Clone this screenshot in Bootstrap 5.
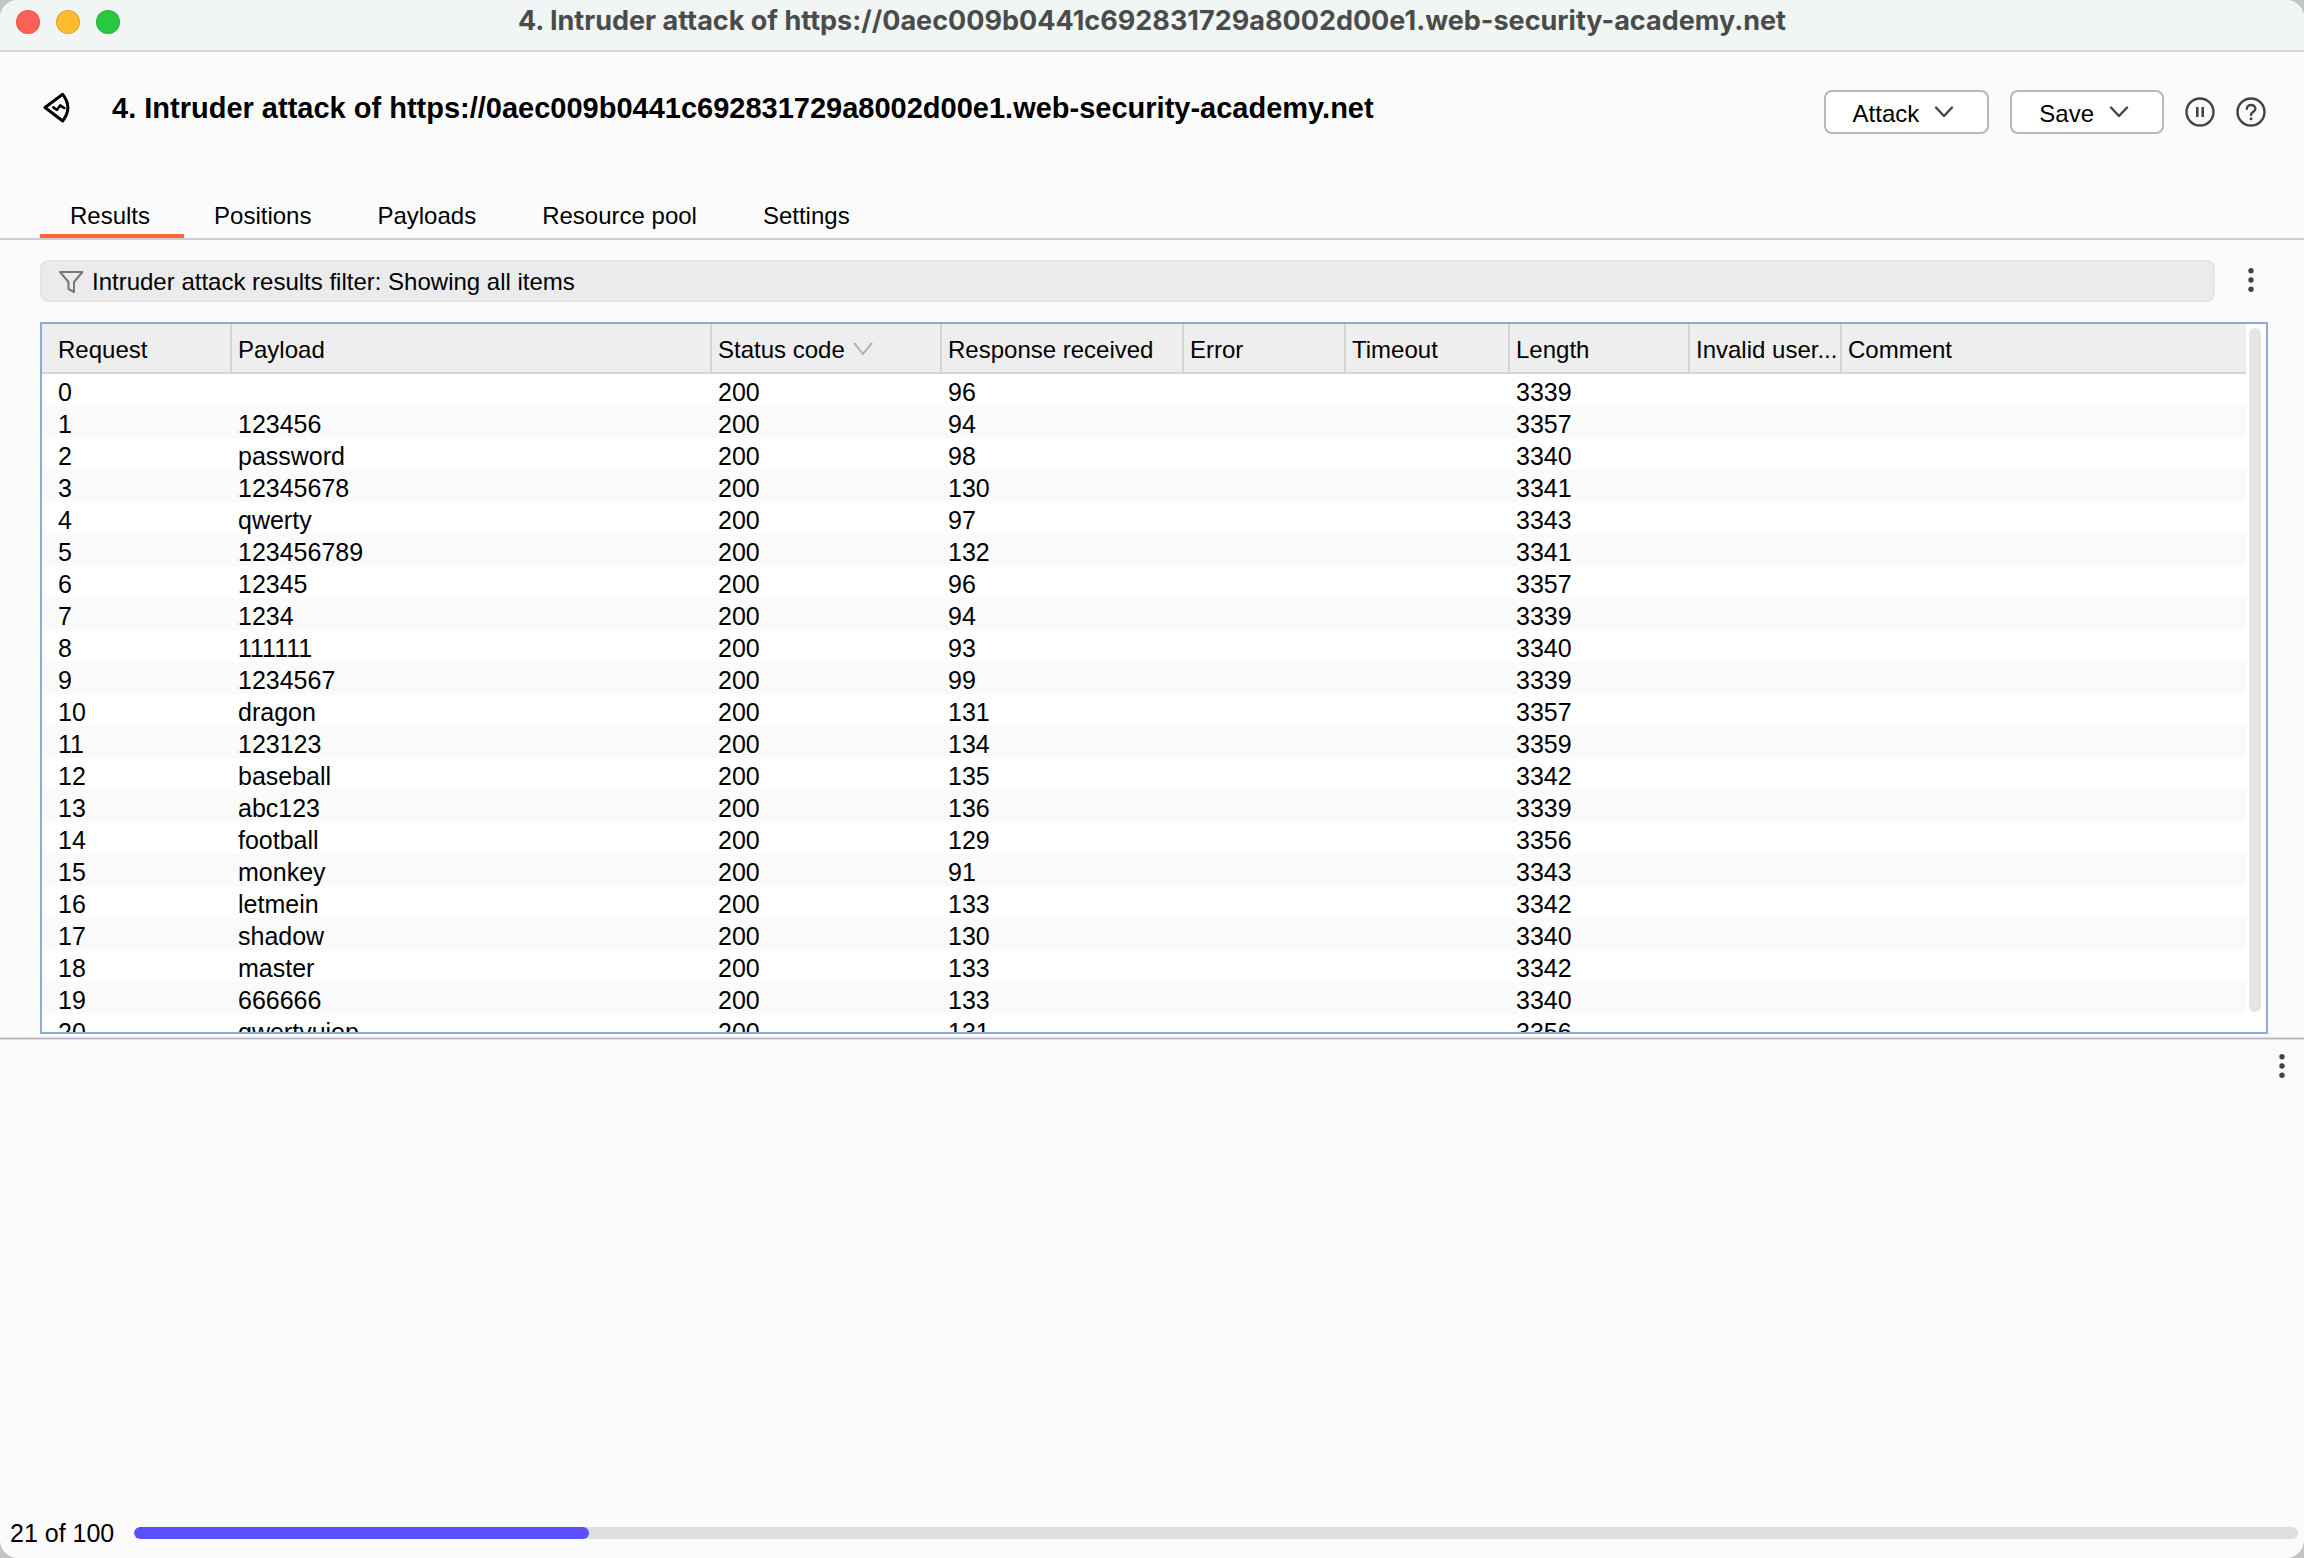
<!DOCTYPE html>
<html lang="en">
<head>
<meta charset="utf-8">
<meta name="viewport" content="width=device-width, initial-scale=1">
<title>Intruder attack</title>
<link href="https://cdn.jsdelivr.net/npm/bootstrap@5.3.0/dist/css/bootstrap.min.css" rel="stylesheet">
<style>
body{background:#c4c4c4;color:#000;font-family:"Liberation Sans",Arial,sans-serif;font-size:24px;line-height:32px}
.app-window{background:#fbfbfb;border-radius:18px;overflow:hidden}
.title-bar{height:52px;background:#f1f5f4;border-bottom:2px solid #d6d9d8;padding-left:16px;padding-bottom:6px}
.light{width:24px;height:24px;border-radius:50%;border:1px solid rgba(0,0,0,.12)}
.light-red{background:#ff5f57}.light-yellow{background:#febb2e}.light-green{background:#28c840}
.lights{gap:16px;width:108px}
.win-title{font-family:Inter,"Liberation Sans",sans-serif;font-weight:700;font-size:27px;line-height:30px;color:#4a4c4b;padding-right:124px;padding-bottom:2px}
.app-head{padding:38px 38px 0 42px;height:148px}
.app-head h1{font-size:29px;font-weight:700;line-height:32px;margin:0;padding-left:40px;padding-top:2px}
.head-actions{gap:21px}
.head-btn{background:#fff;border:2px solid #b9b7b7;border-radius:8px;height:44px;font-size:24px;line-height:32px;color:#000;padding:6px 33px 2px 27px;display:flex;align-items:center;gap:15px}
.head-btn svg{margin-top:-4px}
.round-btn{border:0;background:none;padding:0;display:flex}
.tabs{border-bottom:2px solid #c9cdcf;padding-left:40px;flex-wrap:nowrap}
.tabs .nav-link{color:#000;padding:0 36px 4px 30px;height:38px;border-radius:0}
.tabs .nav-link.active{padding-right:34px;border-bottom:4px solid #ff6633}
.filter-row{padding:20px 38px 20px 40px;gap:21px}
.filter-btn{height:42px;background:#ebebeb;border:2px solid #e5e5e5;border-radius:8px;padding:1px 16px 0;color:#000;text-align:left;display:flex;align-items:center;gap:8px}
.grid-pane{flex:708 1 0;min-height:0;margin:0 36px 3px 40px;border:2px solid #8eacd2;background:#fff;overflow:hidden}
.results{table-layout:fixed;width:100%;border-collapse:separate;border-spacing:0;margin:0}
.results th{font-weight:400;height:50px;background:#eee;border-bottom:2px solid #d4d4d4;border-right:2px solid #d4d4d4;padding:4px 0 0 6px;white-space:nowrap;overflow:hidden}
.results th svg{margin-left:4px;vertical-align:2px}
.results th:last-child{border-right:0}
.results td{height:32px;padding:4px 0 0 6px;font-size:25px;line-height:28px;white-space:nowrap}
.results th:first-child,.results td:first-child{padding-left:16px}
.results tbody tr:nth-child(even){background:#fafafa}
.scroll-track{width:20px;padding:4px 5px 20px 3px}
.scroll-thumb{background:#e5e5e5;border-radius:6px}
.splitter{height:3px;background:#b8b6b6;border-top:1px solid #dedcdc;border-bottom:1px solid #dedcdc}
.detail-pane{flex:476 1 0;min-height:0}
.detail-pane .round-btn{margin:14px 18px 0 0}
.status-row{height:42px;padding:0 6px 8px 10px;gap:20px;font-size:25px}
.attack-progress{height:12px;border-radius:6px;background:#dedede;flex-grow:1}
.attack-progress .progress-bar{background:#5b50ff;border-radius:6px}
</style>
<script src="https://cdn.jsdelivr.net/npm/bootstrap@5.3.0/dist/js/bootstrap.bundle.min.js"></script>
</head>
<body>
<div class="app-window vh-100 d-flex flex-column">
  <header class="title-bar d-flex align-items-center flex-shrink-0">
    <div class="lights d-flex"><span class="light light-red"></span><span class="light light-yellow"></span><span class="light light-green"></span></div>
    <div class="win-title flex-grow-1 text-center">4. Intruder attack of https://0aec009b0441c692831729a8002d00e1.web-security-academy.net</div>
  </header>

  <div class="app-head d-flex align-items-start flex-shrink-0">
    <svg width="30" height="36" viewBox="0 0 30 36" fill="none" stroke="#000" stroke-width="3" stroke-linejoin="round" stroke-linecap="round" aria-hidden="true"><path d="M3 17.500 L20.700 4.300 Q31 17.500 20.700 31 Z"/><path d="M11.300 17.300 L15 19.800 L18.200 15.400 L22.300 18" stroke-width="2.600"/></svg>
    <h1 class="flex-grow-1">4. Intruder attack of https://0aec009b0441c692831729a8002d00e1.web-security-academy.net</h1>
    <div class="head-actions d-flex align-items-center">
      <button type="button" class="head-btn">Attack <svg width="20" height="12" viewBox="0 0 20 12" fill="none" stroke="#444" stroke-width="2.400" stroke-linecap="round" stroke-linejoin="round"><path d="M2 1.500 L10 10 L18 1.500"/></svg></button>
      <button type="button" class="head-btn">Save <svg width="20" height="12" viewBox="0 0 20 12" fill="none" stroke="#444" stroke-width="2.400" stroke-linecap="round" stroke-linejoin="round"><path d="M2 1.500 L10 10 L18 1.500"/></svg></button>
      <button type="button" class="round-btn" aria-label="Pause"><svg width="30" height="30" viewBox="0 0 30 30" fill="none" stroke="#444" stroke-width="2.400"><circle cx="15" cy="15" r="13.500"/><path d="M12.300 10v10M17.700 10v10" stroke-width="2.600"/></svg></button>
      <button type="button" class="round-btn" aria-label="Help"><svg width="30" height="30" viewBox="0 0 30 30" fill="none" stroke="#444" stroke-width="2.400"><circle cx="15" cy="15" r="13.500"/><path d="M10.800 11.800C10.800 6.800 19.400 6.800 19.400 11.800C19.400 14.800 15 14.600 15 18" stroke-linecap="round"/><circle cx="15" cy="21.800" r="1.500" fill="#444" stroke="none"/></svg></button>
    </div>
  </div>

  <ul class="nav tabs flex-shrink-0">
    <li class="nav-item"><a class="nav-link active" href="#">Results</a></li>
    <li class="nav-item"><a class="nav-link" href="#">Positions</a></li>
    <li class="nav-item"><a class="nav-link" href="#">Payloads</a></li>
    <li class="nav-item"><a class="nav-link" href="#">Resource pool</a></li>
    <li class="nav-item"><a class="nav-link" href="#">Settings</a></li>
  </ul>

  <div class="filter-row d-flex align-items-center flex-shrink-0">
    <button type="button" class="filter-btn flex-grow-1"><svg width="26" height="24" viewBox="0 0 26 24" fill="none" stroke="#777" stroke-width="2" stroke-linejoin="round"><path d="M2 2H24.500L16 12V22L10.500 19V12Z"/></svg>Intruder attack results filter: Showing all items</button>
    <button type="button" class="round-btn" aria-label="More options"><svg width="30" height="30" viewBox="0 0 30 30" fill="#444"><circle cx="15" cy="4.700" r="2.700"/><circle cx="15" cy="14" r="2.700"/><circle cx="15" cy="23.300" r="2.700"/></svg></button>
  </div>

  <main class="grid-pane d-flex">
    <div class="flex-grow-1 overflow-hidden">
      <table class="results">
        <colgroup><col style="width:190px"><col style="width:480px"><col style="width:230px"><col style="width:242px"><col style="width:162px"><col style="width:164px"><col style="width:180px"><col style="width:152px"><col></colgroup>
        <thead><tr><th>Request</th><th>Payload</th><th>Status code<svg width="28" height="14" viewBox="0 0 28 14" fill="none" stroke="#b4b4b4" stroke-width="2"><path d="M5 1L14 12L23 1"/></svg></th><th>Response received</th><th>Error</th><th>Timeout</th><th>Length</th><th>Invalid user...</th><th>Comment</th></tr></thead>
        <tbody>
          <tr><td>0</td><td></td><td>200</td><td>96</td><td></td><td></td><td>3339</td><td></td><td></td></tr>
          <tr><td>1</td><td>123456</td><td>200</td><td>94</td><td></td><td></td><td>3357</td><td></td><td></td></tr>
          <tr><td>2</td><td>password</td><td>200</td><td>98</td><td></td><td></td><td>3340</td><td></td><td></td></tr>
          <tr><td>3</td><td>12345678</td><td>200</td><td>130</td><td></td><td></td><td>3341</td><td></td><td></td></tr>
          <tr><td>4</td><td>qwerty</td><td>200</td><td>97</td><td></td><td></td><td>3343</td><td></td><td></td></tr>
          <tr><td>5</td><td>123456789</td><td>200</td><td>132</td><td></td><td></td><td>3341</td><td></td><td></td></tr>
          <tr><td>6</td><td>12345</td><td>200</td><td>96</td><td></td><td></td><td>3357</td><td></td><td></td></tr>
          <tr><td>7</td><td>1234</td><td>200</td><td>94</td><td></td><td></td><td>3339</td><td></td><td></td></tr>
          <tr><td>8</td><td>111111</td><td>200</td><td>93</td><td></td><td></td><td>3340</td><td></td><td></td></tr>
          <tr><td>9</td><td>1234567</td><td>200</td><td>99</td><td></td><td></td><td>3339</td><td></td><td></td></tr>
          <tr><td>10</td><td>dragon</td><td>200</td><td>131</td><td></td><td></td><td>3357</td><td></td><td></td></tr>
          <tr><td>11</td><td>123123</td><td>200</td><td>134</td><td></td><td></td><td>3359</td><td></td><td></td></tr>
          <tr><td>12</td><td>baseball</td><td>200</td><td>135</td><td></td><td></td><td>3342</td><td></td><td></td></tr>
          <tr><td>13</td><td>abc123</td><td>200</td><td>136</td><td></td><td></td><td>3339</td><td></td><td></td></tr>
          <tr><td>14</td><td>football</td><td>200</td><td>129</td><td></td><td></td><td>3356</td><td></td><td></td></tr>
          <tr><td>15</td><td>monkey</td><td>200</td><td>91</td><td></td><td></td><td>3343</td><td></td><td></td></tr>
          <tr><td>16</td><td>letmein</td><td>200</td><td>133</td><td></td><td></td><td>3342</td><td></td><td></td></tr>
          <tr><td>17</td><td>shadow</td><td>200</td><td>130</td><td></td><td></td><td>3340</td><td></td><td></td></tr>
          <tr><td>18</td><td>master</td><td>200</td><td>133</td><td></td><td></td><td>3342</td><td></td><td></td></tr>
          <tr><td>19</td><td>666666</td><td>200</td><td>133</td><td></td><td></td><td>3340</td><td></td><td></td></tr>
          <tr><td>20</td><td>qwertyuiop</td><td>200</td><td>131</td><td></td><td></td><td>3356</td><td></td><td></td></tr>
        </tbody>
      </table>
    </div>
    <div class="scroll-track d-flex flex-shrink-0"><div class="scroll-thumb flex-grow-1"></div></div>
  </main>

  <div class="splitter flex-shrink-0"></div>

  <section class="detail-pane d-flex justify-content-end align-items-start">
    <button type="button" class="round-btn" aria-label="More options"><svg width="8" height="26" viewBox="0 0 8 26" fill="#444"><circle cx="4" cy="2.700" r="2.700"/><circle cx="4" cy="12" r="2.700"/><circle cx="4" cy="21.300" r="2.700"/></svg></button>
  </section>

  <footer class="status-row d-flex align-items-center flex-shrink-0">
    <span>21 of 100</span>
    <div class="progress attack-progress" role="progressbar" aria-label="Attack progress" aria-valuenow="21" aria-valuemin="0" aria-valuemax="100"><div class="progress-bar" style="width:21%"></div></div>
  </footer>
</div>
</body>
</html>
